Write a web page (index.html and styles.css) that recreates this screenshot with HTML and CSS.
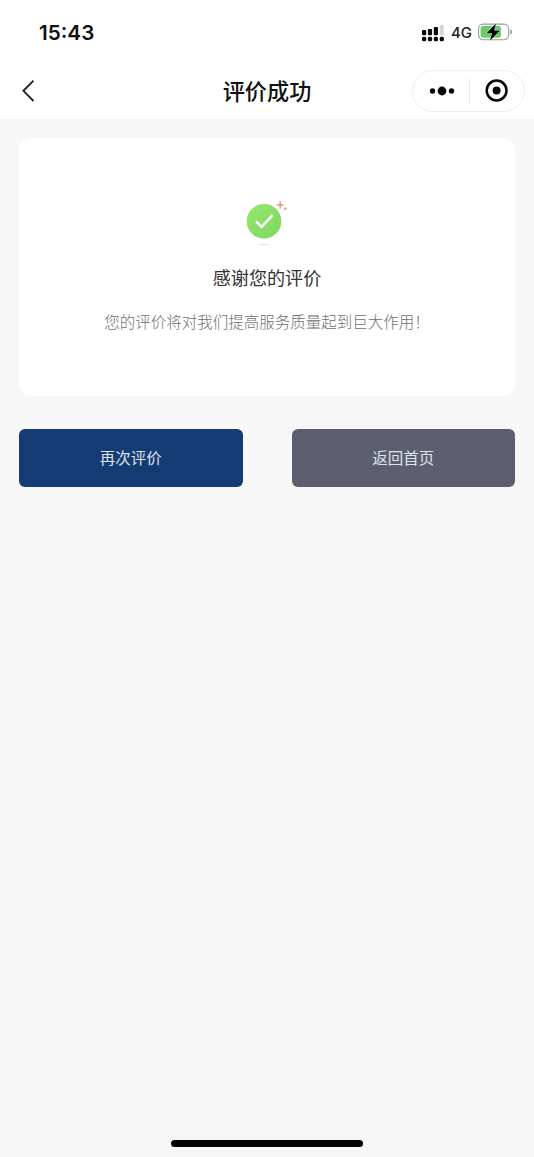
FILE: index.html
```html
<!DOCTYPE html>
<html lang="zh-CN">
<head>
<meta charset="utf-8">
<title>评价成功</title>
<link rel="stylesheet" href="styles.css">
</head>
<body>
<div class="screen">
  <header class="top">
    <div class="status">
      <span class="time">15:43</span>
      <div class="indicators">
        <svg class="signal" width="22" height="17" viewBox="0 0 22 17">
          <g fill="#0b0b0b">
            <rect x="0" y="5" width="4.2" height="5.2" rx="1"/>
            <rect x="5.9" y="4" width="4.2" height="6.2" rx="1"/>
            <rect x="11.8" y="2" width="4.2" height="8.2" rx="1"/>
            <rect x="0" y="11.7" width="4.2" height="4.6" rx="1.5"/>
            <rect x="5.9" y="11.7" width="4.2" height="4.6" rx="1.5"/>
            <rect x="11.8" y="11.7" width="4.2" height="4.6" rx="1.5"/>
            <rect x="17.7" y="11.7" width="4.2" height="4.6" rx="1.5"/>
          </g>
          <rect x="17.7" y="0" width="4" height="10.2" rx="1.2" fill="#d6d6d6"/>
        </svg>
        <span class="network">4G</span>
        <svg class="battery" width="35" height="18" viewBox="0 0 35 18">
          <rect x=".6" y="1.1" width="30" height="15.6" rx="4.6" fill="#fff" stroke="#9b9b9b" stroke-width="1.1"/>
          <rect x="2.6" y="3.1" width="20.4" height="11.6" rx="2.6" fill="#67cc6b"/>
          <path d="M32.3 6.2c2.2.8 2.2 4.6 0 5.4z" fill="#8d8d8d"/>
          <path d="M18 .4 8.6 10.2h5.5l-2.2 7.6L22 7.4h-5.8z" fill="#000" stroke="#fff" stroke-width=".7" paint-order="stroke"/>
        </svg>
      </div>
    </div>
    <nav class="navbar">
      <svg class="back" width="14" height="24" viewBox="0 0 14 24">
        <path d="M12.5 1.6 2.4 11.8 12.5 22" fill="none" stroke="#222" stroke-width="1.9"/>
      </svg>
      <h1 class="title">评价成功</h1>
      <div class="capsule">
        <svg class="more" width="56" height="40" viewBox="0 0 56 40">
          <g fill="#080808"><circle cx="19.5" cy="20" r="2.7"/><circle cx="29" cy="20" r="4.4"/><circle cx="38.5" cy="20" r="2.7"/></g>
        </svg>
        <span class="divider"></span>
        <svg class="close" width="53" height="40" viewBox="0 0 53 40">
          <circle cx="26.6" cy="19.5" r="9.9" fill="none" stroke="#080808" stroke-width="2.5"/>
          <circle cx="26.6" cy="19.5" r="4" fill="#080808"/>
        </svg>
      </div>
    </nav>
  </header>
  <main class="content">
    <section class="card">
      <svg class="success" width="48" height="50" viewBox="0 0 48 50">
        <defs>
          <linearGradient id="disc" x1="0" y1="0" x2="1" y2="1">
            <stop offset="0" stop-color="#94e76b"/><stop offset="1" stop-color="#7dd861"/>
          </linearGradient>
        </defs>
        <circle cx="21" cy="23.3" r="17.3" fill="url(#disc)"/>
        <path d="m13 23.4 5.5 5.5 11.1-11.7" fill="none" stroke="#fff" stroke-width="2.5"/>
        <path d="M37.2 3.5v7M33.7 7h7" stroke="#d99c7d" stroke-width="1.5"/>
        <path d="M42.3 8.8v3.8M40.4 10.7h3.8" stroke="#deae96" stroke-width="1.1"/>
        <ellipse cx="21" cy="46.6" rx="6.5" ry="1.3" fill="#efefef"/>
      </svg>
      <h2 class="thanks">感谢您的评价</h2>
      <p class="note">您的评价将对我们提高服务质量起到巨大作用！</p>
    </section>
    <div class="actions">
      <button class="button button-primary">再次评价</button>
      <button class="button button-secondary">返回首页</button>
    </div>
  </main>
  <footer class="home"><span class="home-bar"></span></footer>
</div>
</body>
</html>
```
FILE: styles.css
```css
* { box-sizing: border-box; }
body {
  margin: 0;
  background: #f7f7f7;
  font-family: "Noto Sans CJK SC", sans-serif;
}
.screen {
  display: flex;
  flex-direction: column;
  width: 534px;
  height: 1157px;
}
.top { height: 119px; background: #fff; }
.status {
  display: flex;
  justify-content: space-between;
  align-items: center;
  height: 64px;
  padding: 0 21px 0 39px;
}
.time {
  padding-top: 1px;
  font: 600 20.7px/24px Inter, sans-serif;
  color: #111;
}
.indicators { display: flex; align-items: center; }
.signal { margin-top: 3px; }
.network {
  margin: 1px 6px 0 7px;
  font: 500 15px/20px Inter, sans-serif;
  color: #222;
}
.navbar {
  display: grid;
  grid-template-columns: 122px 1fr 122px;
  align-items: center;
  height: 53px;
}
.back { margin-left: 21px; }
.title {
  margin: 0;
  padding-bottom: 2px;
  text-align: center;
  font-size: 22.2px;
  line-height: 32px;
  font-weight: 500;
  color: #111;
}
.capsule {
  display: flex;
  align-items: center;
  width: 113px;
  height: 42px;
  border: 1px solid #efefef;
  border-radius: 21px;
}
.divider { width: 1px; height: 26px; background: #ececec; }
.content { flex: 1; padding: 19px 19px 0; }
.card {
  display: flex;
  flex-direction: column;
  align-items: center;
  height: 258px;
  padding-top: 60px;
  border-radius: 12px;
  background: #fff;
}
.thanks {
  margin: 16px 0 0;
  font-size: 18.1px;
  line-height: 26px;
  font-weight: 400;
  color: #333;
}
.note {
  margin: 19px 0 0;
  font-size: 15.5px;
  line-height: 24px;
  font-weight: 300;
  color: #707070;
}
.actions {
  display: flex;
  justify-content: space-between;
  margin-top: 33px;
}
.button {
  width: 223.5px;
  height: 58px;
  padding: 0 0 2px;
  border: 0;
  border-radius: 6px;
  font-family: inherit;
  font-size: 15.5px;
  color: #dfe3ea;
}
.button-primary { background: #153b75; }
.button-secondary { background: #5c5e6f; }
.home {
  display: flex;
  justify-content: center;
  height: 17px;
}
.home-bar {
  width: 192px;
  height: 7px;
  border-radius: 4px;
  background: #000;
}
```
